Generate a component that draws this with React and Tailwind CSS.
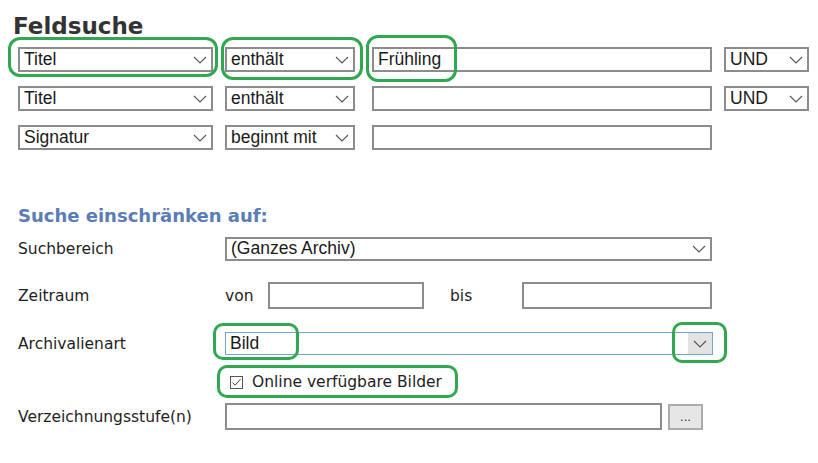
import React from "react";

const ARIAL = { fontFamily: '"Liberation Sans", Arial, sans-serif' };

function Chevron() {
  return (
    <svg width="14" height="8" viewBox="0 0 14 8" className="shrink-0">
      <path d="M1 1 L7 7 L13 1" fill="none" stroke="#555" strokeWidth="1.1" />
    </svg>
  );
}

function Select({ value, className }) {
  return (
    <div
      className={`flex items-center justify-between border-2 border-[#8c8c8c] bg-white pl-[4px] pr-[4px] text-[17.5px] text-[#1a1a1a] leading-none ${className}`}
      style={ARIAL}
    >
      <span>{value}</span>
      <Chevron />
    </div>
  );
}

function Input({ value = "", className }) {
  return (
    <div
      className={`flex items-center border-2 border-[#8c8c8c] bg-white pl-[4px] text-[17.5px] text-[#1a1a1a] leading-none ${className}`}
      style={ARIAL}
    >
      {value}
    </div>
  );
}

function Label({ children }) {
  return <div className="w-[207px] shrink-0 leading-[18px]">{children}</div>;
}

export default function App() {
  return (
    <div
      className="relative w-[818px] h-[463px] overflow-hidden bg-white text-[15.5px] text-[#1e1e1e]"
      style={{ fontFamily: '"DejaVu Sans", Verdana, sans-serif' }}
    >
      <div className="pt-[12px] pl-[13px] text-[23px] font-bold leading-[28px] text-[#333333]">
        Feldsuche
      </div>

      <div className="mt-[7px] flex flex-col gap-[14px] pl-[18px]">
        <div className="flex h-[25px] items-stretch">
          <Select value="Titel" className="w-[195px]" />
          <Select value="enthält" className="ml-[12px] w-[130px]" />
          <Input value="Frühling" className="ml-[17px] w-[340px]" />
          <Select value="UND" className="ml-[12px] w-[85px]" />
        </div>
        <div className="flex h-[25px] items-stretch">
          <Select value="Titel" className="w-[195px]" />
          <Select value="enthält" className="ml-[12px] w-[130px]" />
          <Input className="ml-[17px] w-[340px]" />
          <Select value="UND" className="ml-[12px] w-[85px]" />
        </div>
        <div className="flex h-[25px] items-stretch">
          <Select value="Signatur" className="w-[195px]" />
          <Select value="beginnt mit" className="ml-[12px] w-[130px]" />
          <Input className="ml-[17px] w-[340px]" />
        </div>
      </div>

      <div className="mt-[54px] pl-[18px]">
        <div className="text-[18px] font-bold leading-[24px] text-[#5a7db6]">
          Suche einschränken auf:
        </div>

        <div className="mt-[9px] flex h-[24px] items-center">
          <Label>Suchbereich</Label>
          <Select value="(Ganzes Archiv)" className="h-[24px] w-[487px]" />
        </div>

        <div className="mt-[21px] flex h-[27px] items-center">
          <Label>Zeitraum</Label>
          <span className="w-[43px] leading-[18px]">von</span>
          <Input className="h-[27px] w-[156px]" />
          <span className="ml-[26px] w-[72px] leading-[18px]">bis</span>
          <Input className="h-[27px] w-[190px]" />
        </div>

        <div className="mt-[23px] flex h-[23px] items-center">
          <Label>Archivalienart</Label>
          <div
            className="flex h-[23px] w-[488px] items-stretch border-[1.5px] border-[#6fa7cb] bg-white text-[17.5px] leading-none text-[#1a1a1a]"
            style={ARIAL}
          >
            <span className="flex flex-1 items-center pl-[4px]">Bild</span>
            <span className="flex w-[24px] items-center justify-center bg-[#e3e3e3]">
              <Chevron />
            </span>
          </div>
        </div>

        <div className="mt-[18px] flex h-[18px] items-center pl-[212px]">
          <svg width="13" height="13" viewBox="0 0 13 13" className="shrink-0">
            <rect x="0.5" y="0.5" width="12" height="12" fill="white" stroke="#555" strokeWidth="1" />
            <path d="M2.5 6.5 L5.2 9.2 L10.5 3" fill="none" stroke="#444" strokeWidth="1" />
          </svg>
          <span className="ml-[9px] leading-[18px]">Online verfügbare Bilder</span>
        </div>

        <div className="mt-[12px] flex h-[27px] items-center">
          <Label>Verzeichnungsstufe(n)</Label>
          <Input className="h-[27px] w-[437px]" />
          <div
            className="ml-[6px] flex h-[26px] w-[35px] items-center justify-center border-2 border-[#acacac] bg-[#e6e6e6] text-[13px] text-[#333]"
            style={ARIAL}
          >
            ...
          </div>
        </div>
      </div>

      {/* annotation outlines */}
      <div className="absolute left-[8px] top-[37px] h-[40px] w-[210px] rounded-[12px] border-[3px] border-[#2fa84f]" />
      <div className="absolute left-[221px] top-[37px] h-[43px] w-[142px] rounded-[12px] border-[3px] border-[#2fa84f]" />
      <div className="absolute left-[366px] top-[35px] h-[47px] w-[91px] rounded-[12px] border-[3px] border-[#2fa84f]" />
      <div className="absolute left-[213px] top-[323px] h-[37px] w-[86px] rounded-[10px] border-[3px] border-[#2fa84f]" />
      <div className="absolute left-[217px] top-[365px] h-[33px] w-[241px] rounded-[10px] border-[3px] border-[#2fa84f]" />
      <div className="absolute left-[672px] top-[322px] h-[41px] w-[55px] rounded-[10px] border-[3px] border-[#2fa84f]" />
    </div>
  );
}
